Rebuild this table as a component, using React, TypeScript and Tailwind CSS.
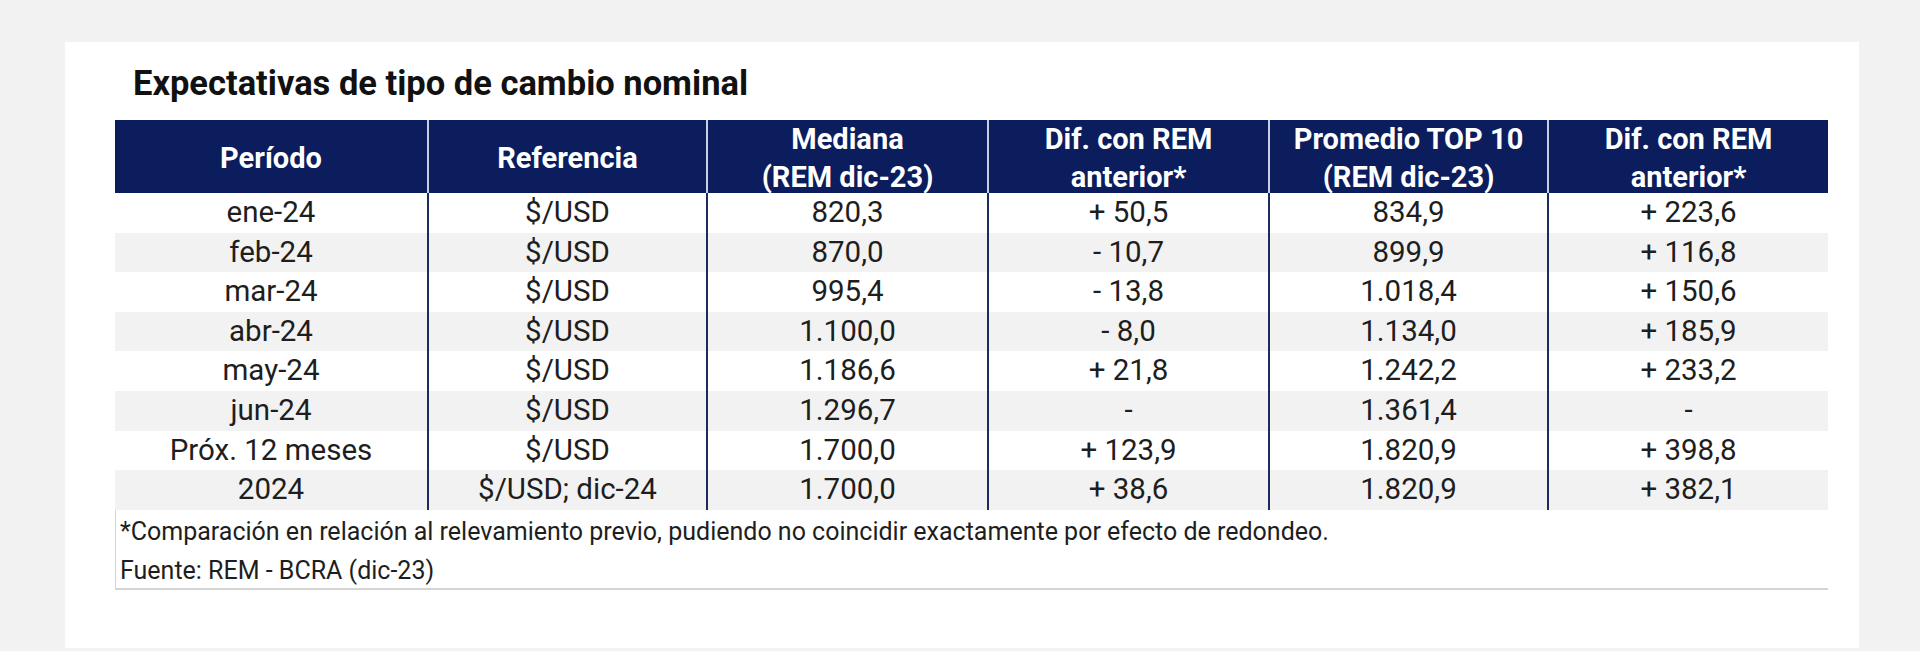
const headers: string[][] = [
  ['Período'],
  ['Referencia'],
  ['Mediana', '(REM dic-23)'],
  ['Dif. con REM', 'anterior*'],
  ['Promedio TOP 10', '(REM dic-23)'],
  ['Dif. con REM', 'anterior*'],
];

const rows: string[][] = [
  ['ene-24', '$/USD', '820,3', '+ 50,5', '834,9', '+ 223,6'],
  ['feb-24', '$/USD', '870,0', '- 10,7', '899,9', '+ 116,8'],
  ['mar-24', '$/USD', '995,4', '- 13,8', '1.018,4', '+ 150,6'],
  ['abr-24', '$/USD', '1.100,0', '- 8,0', '1.134,0', '+ 185,9'],
  ['may-24', '$/USD', '1.186,6', '+ 21,8', '1.242,2', '+ 233,2'],
  ['jun-24', '$/USD', '1.296,7', '-', '1.361,4', '-'],
  ['Próx. 12 meses', '$/USD', '1.700,0', '+ 123,9', '1.820,9', '+ 398,8'],
  ['2024', '$/USD; dic-24', '1.700,0', '+ 38,6', '1.820,9', '+ 382,1'],
];

const cols = 'grid grid-cols-[312px_279px_281px_281px_279px_281px]';

function HeaderRow() {
  return (
    <div className={`${cols} h-[73px] bg-[#0b1d5c]`}>
      {headers.map((lines, i) => (
        <div
          key={i}
          className={`flex flex-col items-center justify-center text-[29px] font-bold leading-[38px] text-white ${i > 0 ? 'border-l-2 border-[#c9cfe0]' : ''}`}
        >
          {lines.map((l) => (
            <span key={l}>{l}</span>
          ))}
        </div>
      ))}
    </div>
  );
}

function DataRow({ cells, striped }: { cells: string[]; striped: boolean }) {
  return (
    <div className={`${cols} h-[39.6px] ${striped ? 'bg-[#f2f2f2]' : 'bg-white'}`}>
      {cells.map((c, i) => (
        <div
          key={i}
          className={`flex items-center justify-center text-[29.5px] leading-none text-[#1e1e1e] ${i > 0 ? 'border-l-[2.5px] border-[#1c2c62]' : ''}`}
        >
          {c}
        </div>
      ))}
    </div>
  );
}

export default function App() {
  return (
    <div className="min-h-screen bg-[#f2f2f2] pl-[65px] pt-[42px] font-['Roboto',sans-serif]">
      <div className="h-[606px] w-[1794px] bg-white pl-[50px] pt-[25px]">
        <h1 className="pl-[18px] text-[34.5px] font-bold leading-[32px] text-[#111111]">
          Expectativas de tipo de cambio nominal
        </h1>
        <div className="mt-[21px] w-[1713px]">
          <HeaderRow />
          {rows.map((r, i) => (
            <DataRow key={r[0]} cells={r} striped={i % 2 === 1} />
          ))}
          <div className="h-[80px] border-b-2 border-l border-[#d4d4d4] pl-[4px] pt-[2px] text-[25px] leading-[39px] text-[#1e1e1e]">
            <p>*Comparación en relación al relevamiento previo, pudiendo no coincidir exactamente por efecto de redondeo.</p>
            <p>Fuente: REM - BCRA (dic-23)</p>
          </div>
        </div>
      </div>
    </div>
  );
}
